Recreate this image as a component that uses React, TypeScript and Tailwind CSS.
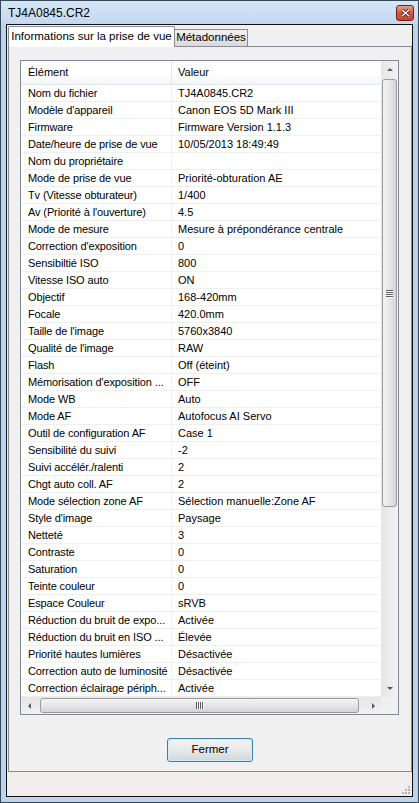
import React from "react";

const rows: [string, string][] = [
  ["Nom du fichier", "TJ4A0845.CR2"],
  ["Modèle d'appareil", "Canon EOS 5D Mark III"],
  ["Firmware", "Firmware Version 1.1.3"],
  ["Date/heure de prise de vue", "10/05/2013 18:49:49"],
  ["Nom du propriétaire", ""],
  ["Mode de prise de vue", "Priorité-obturation AE"],
  ["Tv (Vitesse obturateur)", "1/400"],
  ["Av (Priorité à l'ouverture)", "4.5"],
  ["Mode de mesure", "Mesure à prépondérance centrale"],
  ["Correction d'exposition", "0"],
  ["Sensibiltié ISO", "800"],
  ["Vitesse ISO auto", "ON"],
  ["Objectif", "168-420mm"],
  ["Focale", "420.0mm"],
  ["Taille de l'image", "5760x3840"],
  ["Qualité de l'image", "RAW"],
  ["Flash", "Off (éteint)"],
  ["Mémorisation d'exposition ...", "OFF"],
  ["Mode WB", "Auto"],
  ["Mode AF", "Autofocus AI Servo"],
  ["Outil de configuration AF", "Case 1"],
  ["Sensibilité du suivi", "-2"],
  ["Suivi accélér./ralenti", "2"],
  ["Chgt auto coll. AF", "2"],
  ["Mode sélection zone AF", "Sélection manuelle:Zone AF"],
  ["Style d'image", "Paysage"],
  ["Netteté", "3"],
  ["Contraste", "0"],
  ["Saturation", "0"],
  ["Teinte couleur", "0"],
  ["Espace Couleur", "sRVB"],
  ["Réduction du bruit de expo...", "Activée"],
  ["Réduction du bruit en ISO ...", "Élevée"],
  ["Priorité hautes lumières", "Désactivée"],
  ["Correction auto de luminosité", "Désactivée"],
  ["Correction éclairage périph...", "Activée"],
];

function Arrow({ dir }: { dir: "up" | "down" | "left" | "right" }) {
  const pts = {
    up: "1,5 4,2 7,5",
    down: "1,2 4,5 7,2",
    left: "5,1 2,4 5,7",
    right: "3,1 6,4 3,7",
  }[dir];
  return (
    <svg width="8" height="8" viewBox="0 0 8 8">
      <polygon points={pts} fill="#5a5a5a" />
    </svg>
  );
}

function CloseButton() {
  return (
    <div className="w-[18px] h-[16px] rounded-[3px] border border-[#6b2418] bg-gradient-to-b from-[#e7a08f] via-[#d0553d] to-[#c2482f] flex items-center justify-center">
      <svg width="9" height="8" viewBox="0 0 9 8">
        <path d="M1 1 L8 7 M8 1 L1 7" stroke="#4a1a12" strokeWidth="3" />
        <path d="M1 1 L8 7 M8 1 L1 7" stroke="#ffffff" strokeWidth="1.6" />
      </svg>
    </div>
  );
}

export default function App() {
  const font = { fontFamily: '"Liberation Sans", Arial, sans-serif' };
  return (
    <div
      className="w-[419px] h-[803px] border border-[#39475a] bg-[#bdd4ee] flex flex-col text-[11px] text-black"
      style={font}
    >
      {/* title bar */}
      <div className="h-[23px] shrink-0 flex items-center justify-between pl-[7px] pr-[4px] bg-gradient-to-b from-[#d6e6f7] to-[#c2d8f0]">
        <span className="text-[12px] pt-[1px]">TJ4A0845.CR2</span>
        <CloseButton />
      </div>

      {/* client */}
      <div className="flex-1 mx-[5px] mb-[5px] border border-[#111] bg-[#f0f0f0] flex flex-col">
        {/* tabs */}
        <div className="h-[21px] shrink-0 flex items-end pl-[1px]">
          <div className="relative z-10 -mb-px h-[21px] w-[167px] border border-b-0 border-[#898c95] bg-white flex items-center justify-center whitespace-nowrap rounded-t-[2px] text-[11.5px]">
            Informations sur la prise de vue
          </div>
          <div className="h-[17px] w-[74px] -ml-px border border-b-0 border-[#898c95] bg-gradient-to-b from-[#f2f2f2] to-[#d9d9d9] flex items-center justify-center whitespace-nowrap text-[11.5px]">
            Métadonnées
          </div>
        </div>

        {/* panel */}
        <div className="h-[726px] ml-[1px] border border-[#898c95] flex flex-col items-start pt-[13px] pl-[11px]">
          <div className="w-[379px] h-[655px] border border-[#828790] bg-white flex flex-col">
            <div className="flex flex-1 min-h-0">
              <div className="w-[360px] overflow-hidden flex flex-col">
                {/* header */}
                <div className="h-[24px] shrink-0 flex border-b border-[#e2e5ea] bg-gradient-to-b from-white via-white to-[#f4f6f8]">
                  <div className="w-[151px] shrink-0 pl-[7px] flex items-center border-r border-[#e3e6eb]">Élément</div>
                  <div className="flex-1 pl-[6px] flex items-center">Valeur</div>
                </div>
                {rows.map(([k, v], i) => (
                  <div key={i} className="h-[17px] shrink-0 flex border-b border-[#f0f0f0]">
                    <div className="w-[151px] shrink-0 pl-[7px] border-r border-[#f0f0f0] whitespace-nowrap overflow-hidden tracking-[-0.12px] leading-[16px]">
                      {k}
                    </div>
                    <div className="flex-1 pl-[6px] whitespace-nowrap overflow-hidden leading-[16px]">{v}</div>
                  </div>
                ))}
              </div>
              {/* vertical scrollbar */}
              <div className="w-[17px] flex flex-col bg-gradient-to-r from-[#e6e6e6] to-[#f2f2f2]">
                <div className="h-[17px] flex items-center justify-center"><Arrow dir="up" /></div>
                <div className="flex-1 flex flex-col px-[1px] pt-[1px]">
                  <div className="h-[428px] rounded-[3px] border border-[#9b9b9b] bg-gradient-to-r from-[#f4f4f4] via-[#e6e6e6] to-[#d4d4d4] flex items-center justify-center">
                    <div className="flex flex-col gap-[1px]">
                      {[0, 1, 2, 3].map((n) => (
                        <div key={n} className="w-[7px] h-[1px] bg-[#5c5c5c] shadow-[0_1px_0_#ffffff]" />
                      ))}
                    </div>
                  </div>
                </div>
                <div className="h-[17px] flex items-center justify-center"><Arrow dir="down" /></div>
              </div>
            </div>
            {/* horizontal scrollbar */}
            <div className="h-[17px] shrink-0 flex">
              <div className="w-[360px] flex bg-gradient-to-b from-[#e6e6e6] to-[#f2f2f2]">
                <div className="w-[17px] flex items-center justify-center"><Arrow dir="left" /></div>
                <div className="flex-1 flex items-center pl-[2px] pr-[5px]">
                  <div className="h-[15px] w-full rounded-[3px] border border-[#9b9b9b] bg-gradient-to-b from-[#f4f4f4] via-[#e6e6e6] to-[#d4d4d4] flex items-center justify-center">
                    <div className="flex gap-[1px]">
                      {[0, 1, 2, 3].map((n) => (
                        <div key={n} className="w-[1px] h-[7px] bg-[#5c5c5c] shadow-[1px_0_0_#ffffff]" />
                      ))}
                    </div>
                  </div>
                </div>
                <div className="w-[17px] flex items-center justify-center"><Arrow dir="right" /></div>
              </div>
              <div className="w-[17px] bg-[#f0f0f0]" />
            </div>
          </div>

          <div className="self-center mt-[23px] -ml-[11px] w-[86px] h-[24px] rounded-[3px] border border-[#3c7fb1] p-[1px] bg-[#cfeefd]">
            <div className="w-full h-full rounded-[2px] bg-gradient-to-b from-[#f2f2f2] via-[#e9e9e9] to-[#d3d8de] flex items-center justify-center text-[11.5px]">
              Fermer
            </div>
          </div>
        </div>

        {/* status bar */}
        <div className="flex-1 bg-[#f0edec] flex items-end justify-end pr-[2px] pb-[2px]">
          <svg width="10" height="10" viewBox="0 0 10 10">
            {[
              [8, 2],
              [5, 5],
              [8, 5],
              [2, 8],
              [5, 8],
              [8, 8],
            ].map(([x, y], i) => (
              <rect key={i} x={x} y={y} width="2" height="2" fill="#b5b5b5" />
            ))}
          </svg>
        </div>
      </div>
    </div>
  );
}
